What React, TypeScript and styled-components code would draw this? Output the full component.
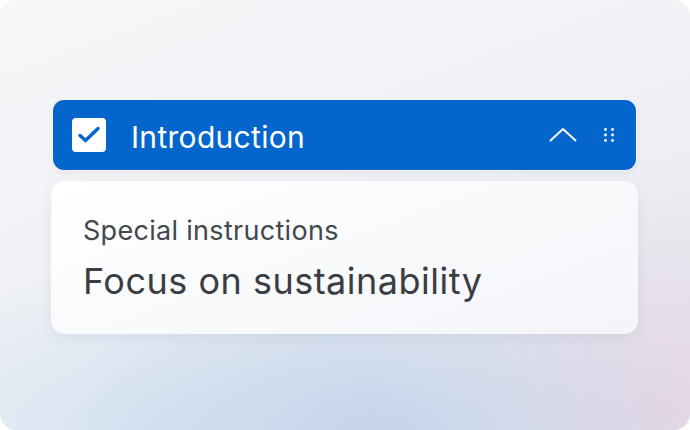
import React from "react";
import styled, { createGlobalStyle } from "styled-components";

const Global = createGlobalStyle`
  html, body { margin: 0; padding: 0; background: #ffffff; }
  body { font-family: Inter, "Noto Sans", sans-serif; }
`;

const Frame = styled.div`
  width: 690px;
  height: 430px;
  border-radius: 16px;
  overflow: hidden;
  box-sizing: border-box;
  padding: 100px 53px 0 52px;
  background:
    radial-gradient(ellipse 320px 200px at 380px 440px, rgba(196, 211, 234, 1), rgba(196, 211, 234, 0) 100%),
    radial-gradient(ellipse 250px 240px at 670px 410px, rgba(228, 214, 228, 1), rgba(228, 214, 228, 0) 100%),
    radial-gradient(ellipse 300px 180px at 150px 440px, rgba(214, 227, 242, 0.95), rgba(214, 227, 242, 0) 100%),
    linear-gradient(160deg, #f6f7f9 0%, #eff1f5 45%, #e4e7ef 100%);
  display: flex;
  flex-direction: column;
  gap: 12px;
`;

const Header = styled.div`
  height: 70px;
  margin: 0 1px;
  box-sizing: border-box;
  background: #0466cc;
  border-radius: 11px;
  box-shadow: 0 0 0 1px rgba(255, 255, 255, 0.6), 0 2px 6px rgba(20, 40, 90, 0.08);
  display: flex;
  align-items: center;
  padding: 0 22px 0 19px;
`;

const Check = styled.div`
  width: 34px;
  height: 34px;
  border-radius: 4px;
  background: #ffffff;
  display: flex;
  flex-shrink: 0;
`;

const Title = styled.div`
  margin-left: 25px;
  padding-top: 4px;
  color: #ffffff;
  font-size: 30px;
  line-height: 36px;
  font-weight: 400;
  letter-spacing: 0.3px;
  flex: 1;
`;

const Actions = styled.div`
  display: flex;
  align-items: center;
  gap: 27px;
`;

const Card = styled.div`
  height: 151px;
  box-sizing: border-box;
  border-radius: 12px;
  background: linear-gradient(160deg, #ffffff 0%, #f9fafc 50%, #f4f5f9 100%);
  box-shadow: 0 0 0 1px rgba(255, 255, 255, 0.8), 0 4px 14px rgba(40, 60, 110, 0.08);
  padding: 34px 31px 0 31px;
  display: flex;
  flex-direction: column;
`;

const Label = styled.div`
  color: #44474c;
  font-size: 27px;
  font-weight: 400;
  line-height: 30px;
  letter-spacing: 0.3px;
`;

const Value = styled.div`
  margin-top: 13px;
  color: #3a3d42;
  font-size: 36px;
  font-weight: 400;
  line-height: 44px;
  letter-spacing: 0.5px;
`;

export default function App() {
  return (
    <>
      <Global />
      <Frame>
        <Header>
          <Check>
            <svg width="34" height="34" viewBox="0 0 34 34">
              <path d="M8 17.5 L13.5 22.5 L26 10.5" fill="none" stroke="#0466cc" strokeWidth="3.4" strokeLinecap="round" strokeLinejoin="round" />
            </svg>
          </Check>
          <Title>Introduction</Title>
          <Actions>
            <svg width="28" height="16" viewBox="0 0 28 16">
              <path d="M1.5 13.5 L14 2 L26.5 13.5" fill="none" stroke="#ffffff" strokeWidth="2" strokeLinecap="round" strokeLinejoin="round" />
            </svg>
            <svg width="10" height="14" viewBox="0 0 10 14">
              {[1.5, 7, 12.5].map((y) => (
                <React.Fragment key={y}>
                  <circle cx="1.5" cy={y} r="1.4" fill="#ffffff" />
                  <circle cx="8.5" cy={y} r="1.4" fill="#ffffff" />
                </React.Fragment>
              ))}
            </svg>
          </Actions>
        </Header>
        <Card>
          <Label>Special instructions</Label>
          <Value>Focus on sustainability</Value>
        </Card>
      </Frame>
    </>
  );
}
